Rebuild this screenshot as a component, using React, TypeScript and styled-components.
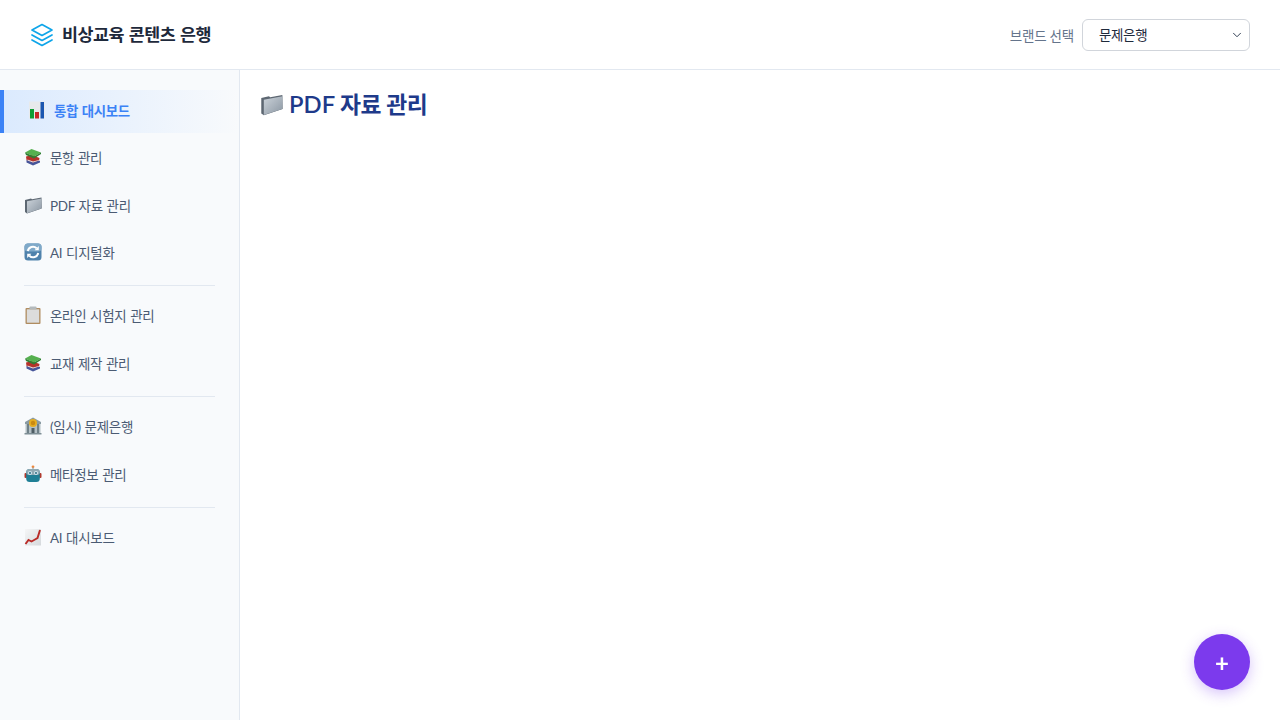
import styled, { createGlobalStyle } from "styled-components";
import { ChevronDown } from "lucide-react";

const GlobalStyle = createGlobalStyle`
  html, body {
    margin: 0;
    padding: 0;
    height: 100%;
    background: #ffffff;
    font-family: Lato, "Noto Sans CJK KR", sans-serif;
    font-size-adjust: 0.506;
  }
  * { box-sizing: border-box; }
`;

const Page = styled.div`
  display: flex;
  flex-direction: column;
  height: 720px;
  overflow: hidden;
`;

const Header = styled.header`
  display: flex;
  align-items: center;
  justify-content: space-between;
  height: 70px;
  flex-shrink: 0;
  padding: 0 30px;
  border-bottom: 1px solid #e2e8f0;
  background: #ffffff;
`;

const Brand = styled.div`
  display: flex;
  align-items: center;
  gap: 8px;
  font-size: 17.5px;
  font-weight: 600;
  line-height: 24px;
  letter-spacing: -0.025em;
  word-spacing: 0.04em;
  color: #1e293b;
`;

const BrandPicker = styled.div`
  display: flex;
  align-items: center;
  gap: 8px;
  font-size: 13.5px;
  letter-spacing: -0.015em;
  color: #64748b;
`;

const SelectWrap = styled.div`
  position: relative;
  display: flex;
`;

const BrandSelect = styled.select`
  width: 168px;
  height: 32px;
  padding: 0 16px;
  appearance: none;
  font-family: inherit;
  font-size: 13.5px;
  font-size-adjust: 0.506;
  letter-spacing: -0.025em;
  color: #1e293b;
  background: #ffffff;
  border: 1px solid #d1d5db;
  border-radius: 6px;
`;

const SelectArrow = styled(ChevronDown)`
  position: absolute;
  top: 9px;
  right: 6px;
  color: #334155;
  pointer-events: none;
`;

const Body = styled.div`
  display: flex;
  flex: 1;
  min-height: 0;
`;

const Sidebar = styled.nav`
  display: flex;
  flex-direction: column;
  width: 240px;
  flex-shrink: 0;
  padding-top: 20px;
  background: #f8fafc;
  border-right: 1px solid #e2e8f0;
`;

const NavItem = styled.a<{ $active?: boolean }>`
  display: flex;
  align-items: center;
  gap: 8px;
  height: 42.6px;
  margin-bottom: 5px;
  padding-left: 24px;
  padding-bottom: 3.5px;
  font-size: 13.5px;
  letter-spacing: -0.022em;
  word-spacing: 0.05em;
  font-weight: ${({ $active }) => ($active ? 600 : 400)};
  color: ${({ $active }) => ($active ? "#3b82f6" : "#4b5b73")};
  border-left: ${({ $active }) => ($active ? "4px solid #3b82f6" : "0")};
  background: ${({ $active }) =>
    $active ? "linear-gradient(90deg, #dbeafe, #f8fafc)" : "transparent"};
`;

const Divider = styled.hr`
  width: 191px;
  height: 1px;
  margin: 5px 0 9.5px 24px;
  border: 0;
  background: #e2e8f0;
  flex-shrink: 0;
`;

const Main = styled.main`
  flex: 1;
  padding: 19px 20px;
`;

const Title = styled.h1`
  display: flex;
  align-items: center;
  gap: 6px;
  margin: 0;
  font-size: 23px;
  font-weight: 600;
  line-height: 30px;
  letter-spacing: -0.02em;
  color: #1e3a8a;
`;

const TitleLatin = styled.span`
  margin-right: 5px;
  font-size: 24px;
  letter-spacing: 0;
`;

const TitleText = styled.span`
  display: inline-flex;
  align-items: baseline;
`;

const Fab = styled.button`
  position: fixed;
  right: 30px;
  bottom: 30px;
  display: flex;
  align-items: center;
  justify-content: center;
  width: 56px;
  height: 56px;
  padding: 0;
  border: 0;
  border-radius: 50%;
  font-family: Lato, sans-serif;
  font-size: 24px;
  font-weight: 700;
  color: #ffffff;
  background: #7c3aed;
  box-shadow: 0 4px 14px rgba(124, 58, 237, 0.3);
`;

const Icon = styled.svg`
  flex-shrink: 0;
  display: block;
`;

const LayersLogo = () => (
  <svg width="24" height="24" viewBox="0 0 24 24" fill="none" stroke="#0ea5e9" strokeWidth="1.7" strokeLinejoin="round" strokeLinecap="round">
    <path d="M12 1.5 2 7l10 5.5L22 7 12 1.5z" />
    <path d="m2 12 10 5.5L22 12" />
    <path d="m2 17 10 5.5L22 17" />
  </svg>
);

const BarsIcon = () => (
  <Icon width="18" height="18" viewBox="0 0 18 18">
    <rect x="1" y="0.5" width="16" height="17" fill="#e8eaec" />
    <rect x="2" y="8" width="4" height="9.5" fill="#0f9d35" />
    <rect x="7" y="11" width="4" height="6.5" fill="#c62828" />
    <rect x="12.5" y="1" width="3.5" height="16.5" fill="#1a56b0" />
  </Icon>
);

const BooksIcon = () => (
  <Icon width="18" height="18" viewBox="0 0 18 18">
    <path d="M2.5 12 9 10.5l7 2.5v1.5L9 17.5l-6.5-3z" fill="#46559a" />
    <path d="M2 8.5 8 7l7.5 3-.5 2.5L9 14.5 2.5 12z" fill="#b5322a" />
    <path d="M3.5 11.5 9 13.5l6-1.6v.7L9 14.5l-5.5-2z" fill="#e6e9ec" />
    <path d="M1 4.5 7.5 1 17 4.5 10 8.5z" fill="#55b04f" />
    <path d="M1 4.5 10 8.5 17 4.5v1.5L10 10.5 2 7z" fill="#2e7d32" />
  </Icon>
);

const FolderIcon = ({ size = 18 }: { size?: number }) => (
  <Icon width={size} height={size} viewBox="0 0 18 18">
    <defs>
      <linearGradient id="folderFace" x1="0" y1="0" x2="1" y2="1">
        <stop offset="0" stopColor="#ccd3da" />
        <stop offset="1" stopColor="#8a96a2" />
      </linearGradient>
    </defs>
    <path d="M1 4 7 2.5l1 .8L17.5 1.5l.2 11L3 17.5 1 16z" fill="#5d6772" />
    <path d="M3 5.2 17.6 2.6l-.2 9.9L3 17.2z" fill="url(#folderFace)" />
  </Icon>
);

const SyncIcon = () => (
  <Icon width="18" height="18" viewBox="0 0 18 18">
    <rect x="0.5" y="0.5" width="17" height="17" rx="3.5" fill="#4f82ac" />
    <rect x="0.5" y="0.5" width="17" height="8" rx="3.5" fill="#7fa9c9" />
    <path d="M3.8 8a5.2 5.2 0 0 1 8.8-2.8" fill="none" stroke="#fff" strokeWidth="2" />
    <path d="M14.2 10a5.2 5.2 0 0 1-8.8 2.8" fill="none" stroke="#fff" strokeWidth="2" />
    <path d="M14.8 3v4.2h-4.2zM3.2 15v-4.2h4.2z" fill="#fff" />
  </Icon>
);

const ClipboardIcon = () => (
  <Icon width="18" height="18" viewBox="0 0 18 18">
    <rect x="1.5" y="2" width="15" height="16" rx="1" fill="#b08c60" />
    <rect x="2.8" y="3.3" width="12.4" height="13.4" fill="#dcdcdc" />
    <rect x="5.5" y="0.5" width="7" height="3" rx="0.8" fill="#b4babd" />
  </Icon>
);

const BankIcon = () => (
  <Icon width="18" height="18" viewBox="0 0 18 18">
    <path d="M9 .5 17 5v2H1V5z" fill="#8a9ba3" />
    <rect x="1.5" y="7" width="15" height="9" fill="#b3bfc4" />
    <rect x="3" y="7" width="2" height="9" fill="#6f8088" />
    <rect x="13" y="7" width="2" height="9" fill="#6f8088" />
    <rect x="7.5" y="11" width="3" height="5" fill="#4e5d64" />
    <rect x="0.5" y="16" width="17" height="1.5" fill="#7f8f96" />
    <circle cx="9" cy="6" r="4" fill="#e6ad20" />
    <circle cx="9" cy="6" r="2.2" fill="#c98a12" />
  </Icon>
);

const RobotIcon = () => (
  <Icon width="18" height="18" viewBox="0 0 18 18">
    <circle cx="9" cy="1.8" r="1.4" fill="#f0873a" />
    <rect x="8.4" y="2.5" width="1.2" height="2" fill="#9aa7ad" />
    <rect x="0.5" y="8" width="2.5" height="5" rx="1" fill="#b03a2e" />
    <rect x="15" y="8" width="2.5" height="5" rx="1" fill="#b03a2e" />
    <rect x="2.2" y="4" width="13.6" height="13" rx="3.5" fill="#1f7f95" />
    <rect x="2.2" y="4" width="13.6" height="6" rx="3" fill="#8fa9b3" />
    <circle cx="6" cy="8" r="2" fill="#cfe6f0" />
    <circle cx="12" cy="8" r="2" fill="#cfe6f0" />
    <circle cx="6" cy="8" r="0.9" fill="#1b5f73" />
    <circle cx="12" cy="8" r="0.9" fill="#1b5f73" />
  </Icon>
);

const TrendIcon = () => (
  <Icon width="18" height="18" viewBox="0 0 18 18">
    <defs>
      <linearGradient id="trendPaper" x1="0" y1="0" x2="1" y2="1">
        <stop offset="0" stopColor="#f5f6f7" />
        <stop offset="1" stopColor="#d5d9dc" />
      </linearGradient>
    </defs>
    <path d="M1 1h16v16.5H1z" fill="url(#trendPaper)" />
    <path d="M1.5 16 4.5 12l3 1.5 3.5-2 2.5-1.5L16 2" fill="none" stroke="#b92b27" strokeWidth="1.9" />
  </Icon>
);

type NavEntry = { icon: React.ReactNode; label: string; active?: boolean };

const groups: NavEntry[][] = [
  [
    { icon: <BarsIcon />, label: "통합 대시보드", active: true },
    { icon: <BooksIcon />, label: "문항 관리" },
    { icon: <FolderIcon />, label: "PDF 자료 관리" },
    { icon: <SyncIcon />, label: "AI 디지털화" },
  ],
  [
    { icon: <ClipboardIcon />, label: "온라인 시험지 관리" },
    { icon: <BooksIcon />, label: "교재 제작 관리" },
  ],
  [
    { icon: <BankIcon />, label: "(임시) 문제은행" },
    { icon: <RobotIcon />, label: "메타정보 관리" },
  ],
  [{ icon: <TrendIcon />, label: "AI 대시보드" }],
];

export default function App() {
  return (
    <Page>
      <GlobalStyle />
      <Header>
        <Brand>
          <LayersLogo />
          비상교육 콘텐츠 은행
        </Brand>
        <BrandPicker>
          브랜드 선택
          <SelectWrap>
            <BrandSelect defaultValue="문제은행">
              <option>문제은행</option>
            </BrandSelect>
            <SelectArrow size={14} strokeWidth={1.7} />
          </SelectWrap>
        </BrandPicker>
      </Header>
      <Body>
        <Sidebar>
          {groups.map((items, i) => (
            <div key={i}>
              {i > 0 && <Divider />}
              {items.map((item) => (
                <NavItem key={item.label} $active={item.active}>
                  {item.icon}
                  {item.label}
                </NavItem>
              ))}
            </div>
          ))}
        </Sidebar>
        <Main>
          <Title>
            <FolderIcon size={23} />
            <TitleText>
              <TitleLatin>PDF</TitleLatin>
              자료 관리
            </TitleText>
          </Title>
        </Main>
      </Body>
      <Fab>+</Fab>
    </Page>
  );
}
